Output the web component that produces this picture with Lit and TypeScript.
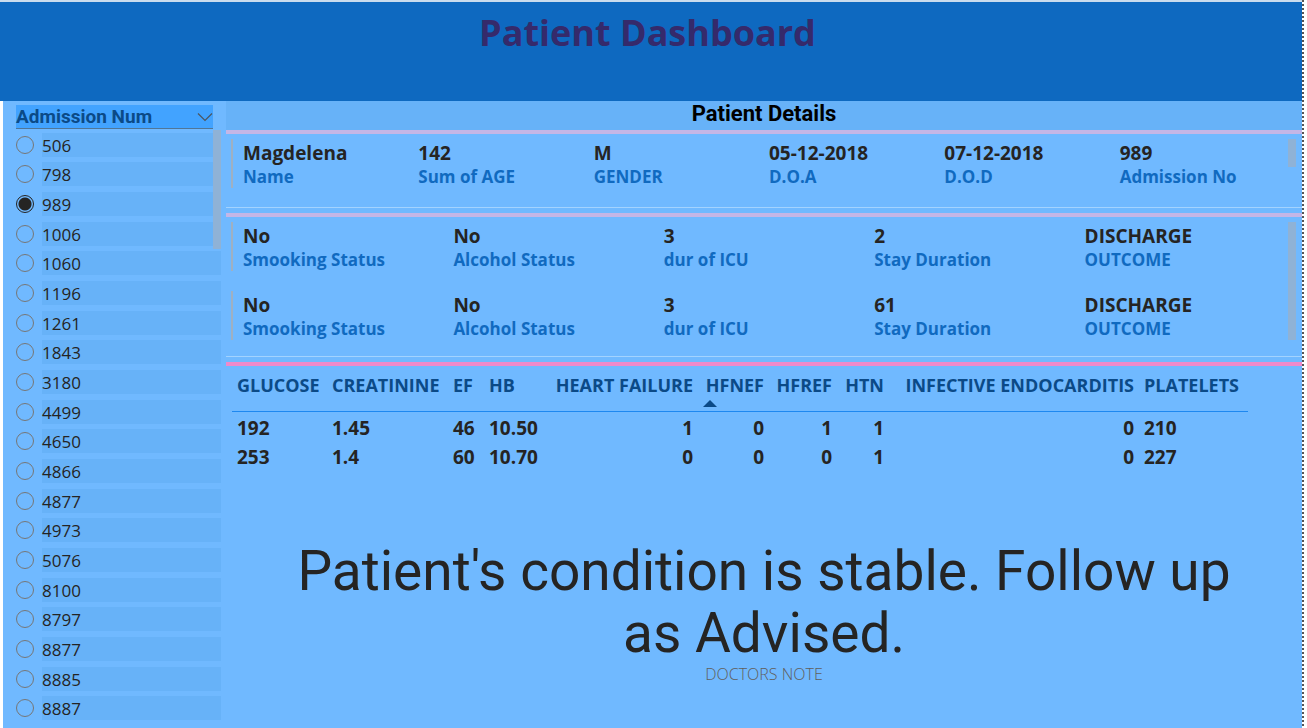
import { LitElement, html, css } from "lit";
import { customElement, property, state } from "lit/decorators.js";

interface Field {
  value: string;
  label: string;
}

interface Column {
  title: string;
  share: number;
  numeric?: boolean;
  sorted?: boolean;
}

const admissions = [
  "506", "798", "989", "1006", "1060", "1196", "1261", "1843", "3180", "4499",
  "4650", "4866", "4877", "4973", "5076", "8100", "8797", "8877", "8885", "8887",
];

const identity: Field[][] = [
  [
    { value: "Magdelena", label: "Name" },
    { value: "142", label: "Sum of AGE" },
    { value: "M", label: "GENDER" },
    { value: "05-12-2018", label: "D.O.A" },
    { value: "07-12-2018", label: "D.O.D" },
    { value: "989", label: "Admission No" },
  ],
];

const stay = (days: string): Field[] => [
  { value: "No", label: "Smooking Status" },
  { value: "No", label: "Alcohol Status" },
  { value: "3", label: "dur of ICU" },
  { value: days, label: "Stay Duration" },
  { value: "DISCHARGE", label: "OUTCOME" },
];

const columns: Column[] = [
  { title: "GLUCOSE", share: 95 },
  { title: "CREATININE", share: 121 },
  { title: "EF", share: 36 },
  { title: "HB", share: 63 },
  { title: "HEART FAILURE", share: 151, numeric: true },
  { title: "HFNEF", share: 71, numeric: true, sorted: true },
  { title: "HFREF", share: 68, numeric: true },
  { title: "HTN", share: 52, numeric: true },
  { title: "INFECTIVE ENDOCARDITIS", share: 250, numeric: true },
  { title: "PLATELETS", share: 109 },
];

const results = [
  ["192", "1.45", "46", "10.50", "1", "0", "1", "1", "0", "210"],
  ["253", "1.4", "60", "10.70", "0", "0", "0", "1", "0", "227"],
];

@customElement("admission-slicer")
export class AdmissionSlicer extends LitElement {
  @state() private selected = "989";

  static styles = css`
    :host {
      display: flex;
      flex-direction: column;
      padding: 4px 5px 5px 13px;
    }
    .toggle {
      display: flex;
      align-items: center;
      justify-content: space-between;
      height: 24px;
      margin: 0 8px 1px 0;
      padding: 0;
      border: 0;
      border-bottom: 1px solid #4f7698;
      background: #42a3ff;
      color: #0b4a87;
      font: 700 19px/22px Roboto, sans-serif;
    }
    .chevron {
      width: 16px;
      height: 10px;
      fill: none;
      stroke: #4d5660;
      stroke-width: 1.2;
    }
    .list {
      position: relative;
      flex: 1;
      display: grid;
      grid-auto-rows: 1fr;
      margin: 0;
      padding: 0;
      border: 0;
    }
    .row {
      display: grid;
      grid-template-columns: 18px 1fr;
      column-gap: 8px;
      align-items: center;
      min-height: 26px;
    }
    .radio {
      appearance: none;
      width: 18px;
      height: 18px;
      margin: 0;
      border: 1px solid #767676;
      border-radius: 50%;
    }
    .radio:checked {
      border-color: #252423;
      background: radial-gradient(circle, #252423 6px, transparent 7px);
    }
    .text {
      height: 24px;
      background: #67b2f8;
      color: #252423;
      font: 400 17px/26px "Open Sans", "Noto Sans", sans-serif;
    }
    .thumb {
      position: absolute;
      top: 0;
      right: 0;
      width: 8px;
      height: 20%;
      background: #8fb2d6;
    }
  `;

  render() {
    return html`
      <button class="toggle" type="button">
        <span>Admission Num</span>
        <svg class="chevron" viewBox="0 0 16 10" aria-hidden="true">
          <path d="M1 1.5 8 8.5 15 1.5" />
        </svg>
      </button>
      <fieldset class="list" aria-label="Admission Num">
        ${admissions.map(
          (id) => html`
            <label class="row">
              <input
                class="radio"
                type="radio"
                name="admission"
                .checked=${id === this.selected}
                @change=${() => (this.selected = id)}
              />
              <span class="text">${id}</span>
            </label>
          `,
        )}
        <div class="thumb"></div>
      </fieldset>
    `;
  }
}

@customElement("field-card")
export class FieldCard extends LitElement {
  @property({ attribute: false }) rows: Field[][] = [];

  static styles = css`
    :host {
      display: grid;
      grid-template-columns: 1fr 8px;
      column-gap: 3px;
      padding: 5px 6px 0 5px;
      border-top: 4px solid #c4b6e6;
    }
    .rows {
      display: grid;
      row-gap: 20px;
      padding-bottom: 19px;
    }
    .many {
      padding-bottom: 16px;
    }
    .record {
      display: grid;
      grid-auto-flow: column;
      grid-auto-columns: 1fr;
      height: 49px;
      margin: 0;
      border-left: 2px solid #9fb0c2;
    }
    .field {
      display: flex;
      flex-direction: column-reverse;
      justify-content: flex-end;
      padding: 2px 0 0 10px;
      white-space: nowrap;
    }
    .label,
    .value {
      margin: 0;
      font: 700 17px/24px "Open Sans", "Noto Sans", sans-serif;
    }
    .label {
      color: #106ac0;
    }
    .value {
      color: #252423;
      font-size: 19px;
    }
    .thumb {
      height: 28px;
      background: #8fb2d6;
    }
    .tall {
      height: 118px;
    }
    .rule {
      grid-column: 1 / -1;
      height: 1px;
      margin: 0 -6px 5px -5px;
      background: #a3d3ff;
    }
  `;

  render() {
    const many = this.rows.length > 1;
    return html`
      <div class="rows ${many ? "many" : ""}">
        ${this.rows.map(
          (row) => html`
            <dl class="record">
              ${row.map(
                (f) => html`
                  <div class="field">
                    <dt class="label">${f.label}</dt>
                    <dd class="value">${f.value}</dd>
                  </div>
                `,
              )}
            </dl>
          `,
        )}
      </div>
      <div class="thumb ${many ? "tall" : ""}"></div>
      <div class="rule"></div>
    `;
  }
}

@customElement("lab-table")
export class LabTable extends LitElement {
  static styles = css`
    :host {
      display: block;
      padding: 5px 54px 0 6px;
      border-top: 4px solid #ee8acb;
    }
    .table {
      width: 100%;
      table-layout: fixed;
      border-collapse: collapse;
      color: #252423;
      font: 700 19px/29px "Open Sans", "Noto Sans", sans-serif;
      white-space: nowrap;
    }
    .head,
    .cell {
      padding: 0 5px;
      text-align: left;
    }
    .head {
      position: relative;
      height: 40px;
      border-bottom: 1px solid #1e88f0;
      color: #0b4a87;
      font-size: 18px;
      vertical-align: top;
    }
    .head.numeric,
    .cell.numeric {
      text-align: right;
    }
    .first .cell {
      padding-top: 2px;
    }
    .arrow {
      position: absolute;
      left: 5px;
      bottom: 4px;
      width: 14px;
      height: 7px;
      fill: #0b4a87;
    }
  `;

  render() {
    const total = columns.reduce((sum, c) => sum + c.share, 0);
    return html`
      <table class="table">
        <colgroup>
          ${columns.map((c) => html`<col style="width:${(c.share / total) * 100}%" />`)}
        </colgroup>
        <thead>
          <tr>
            ${columns.map(
              (c) => html`
                <th class="head ${c.numeric ? "numeric" : ""}" scope="col">
                  ${c.title}${c.sorted
                    ? html`<svg class="arrow" viewBox="0 0 14 7" aria-hidden="true"><path d="M0 7 7 0l7 7z" /></svg>`
                    : ""}
                </th>
              `,
            )}
          </tr>
        </thead>
        <tbody>
          ${results.map(
            (row, r) => html`
              <tr class=${r === 0 ? "first" : ""}>
                ${row.map((v, i) => html`<td class="cell ${columns[i].numeric ? "numeric" : ""}">${v}</td>`)}
              </tr>
            `,
          )}
        </tbody>
      </table>
    `;
  }
}

@customElement("app-root")
export class AppRoot extends LitElement {
  static styles = css`
    :host {
      display: grid;
      grid-template-columns: 1fr 2px;
      box-sizing: border-box;
      min-height: 100vh;
      padding-right: 3px;
      background: #fff;
    }
    .page {
      display: flex;
      flex-direction: column;
      border-top: 2px solid #c9dcee;
    }
    .edge {
      background: repeating-linear-gradient(#555 0 2px, #fff 2px 4px);
    }
    .banner {
      height: 99px;
      background: #0e69c0;
    }
    .title {
      margin: 0;
      padding: 6px 7px 0 0;
      color: #352a6b;
      font: 700 36px/50px "Open Sans", "Noto Sans", sans-serif;
      text-align: center;
    }
    .body {
      flex: 1;
      display: grid;
      grid-template-columns: 223px 1fr;
      margin-left: 3px;
      background: #70b9ff;
    }
    .details {
      display: flex;
      flex-direction: column;
    }
    .heading {
      margin: 0;
      background: #67b2f8;
      color: #000;
      font: 700 22px/26px Roboto, sans-serif;
      padding-bottom: 3px;
      text-align: center;
    }
    .note {
      display: flex;
      flex-direction: column-reverse;
      margin: 68px 60px 0;
      text-align: center;
    }
    .message {
      margin: 0;
      color: #252423;
      font: 400 55px/62px Roboto, sans-serif;
    }
    .caption {
      color: #605e5c;
      font: 300 16px/20px "Open Sans", "Noto Sans", sans-serif;
    }
  `;

  render() {
    return html`
      <div class="page">
        <header class="banner"><h1 class="title">Patient Dashboard</h1></header>
        <div class="body">
          <admission-slicer></admission-slicer>
          <main class="details">
            <h2 class="heading">Patient Details</h2>
            <field-card .rows=${identity}></field-card>
            <field-card .rows=${[stay("2"), stay("61")]}></field-card>
            <lab-table></lab-table>
            <figure class="note">
              <figcaption class="caption">DOCTORS NOTE</figcaption>
              <p class="message">Patient's condition is stable. Follow up as Advised.</p>
            </figure>
          </main>
        </div>
      </div>
      <div class="edge"></div>
    `;
  }
}
